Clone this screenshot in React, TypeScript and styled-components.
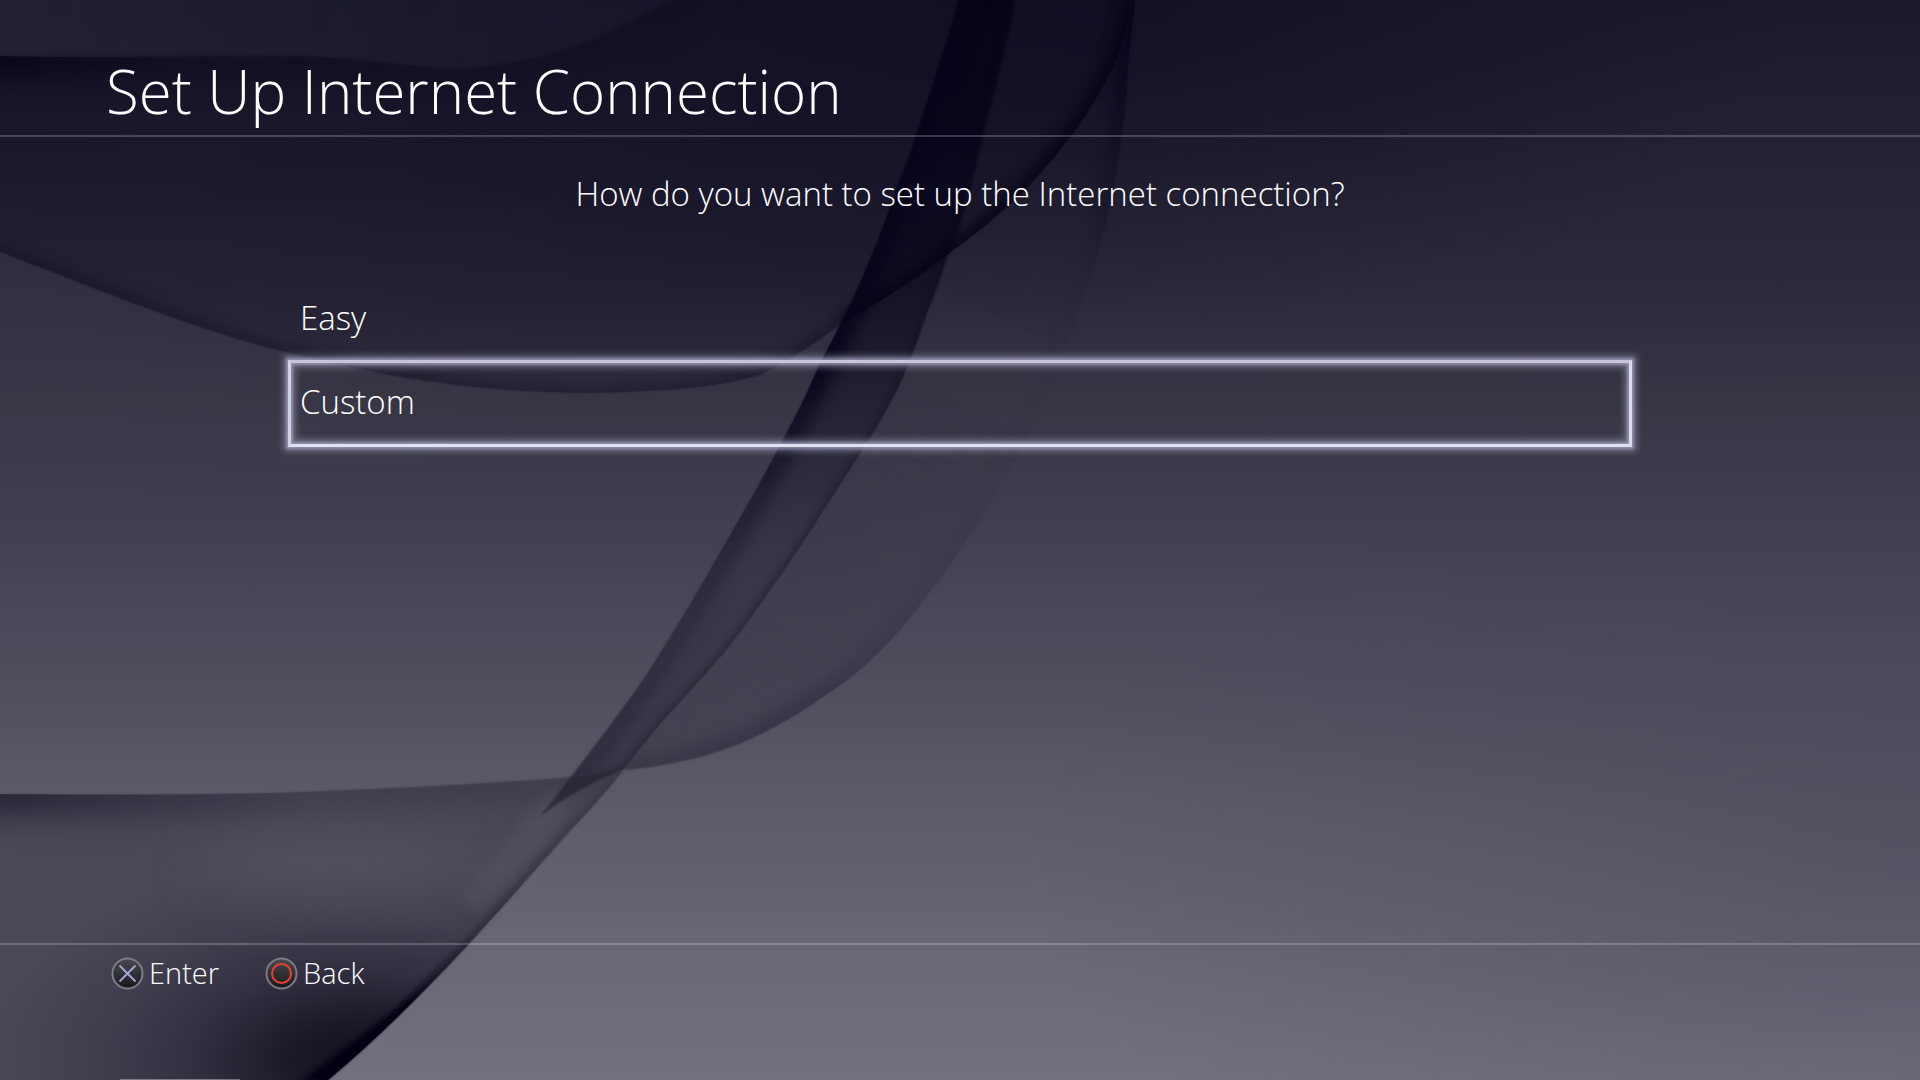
import React from "react";
import styled, { createGlobalStyle, css } from "styled-components";

const GlobalStyle = createGlobalStyle`
  *, *::before, *::after { box-sizing: border-box; }
  body { margin: 0; background: #2b293a; }
`;

const rule = "2px solid rgba(255, 255, 255, 0.2)";

const Screen = styled.div`
  display: grid;
  min-height: 100vh;
  overflow: hidden;
  color: #fff;
  font-family: "Open Sans", "Noto Sans", sans-serif;
  font-weight: 300;
`;

const Wallpaper = styled.svg`
  grid-area: 1 / 1;
  display: block;
  width: 100%;
  height: 100%;
  min-height: 100vh;
`;

const Layout = styled.div`
  grid-area: 1 / 1;
  z-index: 1;
  display: flex;
  flex-direction: column;
  min-width: 0;
`;

const Header = styled.header`
  display: flex;
  align-items: flex-end;
  height: 137px;
  padding: 0 106px;
  border-bottom: ${rule};
`;

const Title = styled.h1`
  margin: 0;
  font-size: 60px;
  font-weight: 300;
  line-height: 88px;
`;

const Main = styled.main`
  display: flex;
  flex: 1;
  flex-direction: column;
  align-items: center;
`;

const Prompt = styled.p`
  margin: 36px 0 61px;
  font-size: 33px;
  line-height: 42px;
`;

const Options = styled.ul`
  width: 70%;
  margin: 0;
  padding: 0;
  list-style: none;

  li + li {
    margin-top: -3px;
  }
`;

const Option = styled.button<{ $focused?: boolean }>`
  display: flex;
  align-items: center;
  width: 100%;
  height: 87px;
  padding: 0 9px 5px;
  border: 3px solid transparent;
  background: none;
  color: inherit;
  font: inherit;
  font-size: 33px;
  text-align: left;
  cursor: pointer;

  ${({ $focused }) =>
    $focused &&
    css`
      border-color: #c6c5dc #dcdcf0 #dfe0f0 #d2d1e6;
      box-shadow:
        0 0 3px 2px rgba(190, 190, 218, 0.55),
        0 0 6px 5px rgba(170, 170, 204, 0.4),
        inset 0 0 3px 2px rgba(190, 190, 218, 0.55),
        inset 0 0 6px 5px rgba(170, 170, 204, 0.4);
    `}
`;

const Footer = styled.footer`
  display: flex;
  flex-direction: column;
  justify-content: space-between;
  height: 137px;
  padding: 0 111px;
  border-top: ${rule};
`;

const Hints = styled.div`
  display: flex;
  gap: 46px;
  padding-top: 7px;
`;

const Hint = styled.button`
  display: flex;
  align-items: center;
  gap: 5px;
  height: 42px;
  padding: 0;
  border: 0;
  background: none;
  color: inherit;
  font: inherit;
  font-size: 29px;
  line-height: 40px;
  cursor: pointer;
`;

const HintIcon = styled.svg`
  display: block;
  width: 33px;
  height: 33px;
`;

const Handle = styled.div`
  width: 120px;
  height: 1px;
  margin-left: 9px;
  background: rgba(255, 255, 255, 0.35);
`;

function PadButton({ id, children }: { id: string; children: React.ReactNode }) {
  return (
    <HintIcon viewBox="0 0 33 33" fill="none" aria-hidden="true">
      <defs>
        <linearGradient id={id} x1="0" y1="0" x2="0" y2="1">
          <stop offset="0" stopColor="#4a4b4e" />
          <stop offset="1" stopColor="#17171c" />
        </linearGradient>
      </defs>
      <circle cx="16.5" cy="16.5" r="15" fill={`url(#${id})`} stroke="#7c7d84" strokeWidth="2" />
      {children}
    </HintIcon>
  );
}

const SHEET_HEM =
  "M-40 234 L0 252 C100 290 200 332 290 353 C400 382 500 393 590 393 C660 392 715 388 760 375 C800 356 822 337 843 323 C865 310 882 300 900 288 C918 277 930 268 947 255 C970 238 988 224 1007 207 C1020 196 1032 183 1043 170 C1054 158 1062 148 1070 137 C1080 124 1087 114 1093 103 C1102 89 1108 78 1113 67 C1122 47 1129 22 1132 0";
const SHEET = `${SHEET_HEM} L1136 -20 L-40 -20 Z`;

const FOLD_EDGE = "M-60 56 L0 56 C120 59 210 55 300 56 C370 58 420 70 470 68 C560 60 610 35 670 0 L710 -30";
const TOP_FOLD = `${FOLD_EDGE} L-60 -30 Z`;
const UNDER_FOLD = `${FOLD_EDGE} L1000 -30 L1000 300 L-60 300 Z`;

const RIBBON_LEFT =
  "M965 -20 L959 0 C944 50 929 98 916 135 C911 153 904 170 897 187 C886 222 873 252 860 283 C847 312 834 338 820 363 C808 392 794 420 779 447 C758 487 736 525 714 563 C690 605 663 650 636 690 C614 720 593 748 571 777 C560 791 550 804 539 817";
const RIBBON_RIGHT =
  "C575 790 596 781 623 770 C636 754 648 739 661 723 C684 698 706 674 729 647 C753 615 777 581 800 547 C822 513 843 480 864 447 C880 423 892 401 903 377 C912 357 919 336 927 313 C935 294 941 276 947 257 C952 247 956 237 960 227 C968 197 976 167 983 135 C995 90 1007 45 1015 0 L1018 -20";
const RIBBON = `${RIBBON_LEFT} ${RIBBON_RIGHT} Z`;

const VEIL_EDGE =
  "M1138 -20 L1135 0 C1133 22 1130 45 1128 67 C1127 90 1125 113 1122 135 C1119 159 1115 183 1110 207 C1105 227 1099 247 1093 267 C1089 280 1085 293 1080 307 C1069 340 1058 372 1045 400 C1026 440 1004 483 979 523 C962 547 946 571 929 593 C901 632 868 668 829 693 C792 719 748 745 700 757 C676 763 651 768 623 770";
const VEIL = `${VEIL_EDGE} ${RIBBON_RIGHT.replace("C575 790 596 781 623 770 ", "")} Z`;

const SWELL_TOP = "M-80 794 L0 794 C100 795 230 795 300 792 C400 788 480 784 560 778 L623 771";
const HEM = "M623 771 C606 792 589 811 571 830 C557 846 543 861 529 877 C509 900 489 922 468 945 C424 992 376 1040 328 1080 L300 1104";
const SWELL = `${SWELL_TOP} ${HEM.slice(8)} L-80 1104 Z`;

function Waves() {
  return (
    <Wallpaper viewBox="0 0 1920 1080" preserveAspectRatio="none" aria-hidden="true">
      <defs>
        <linearGradient id="base" x1="0" y1="0" x2="0" y2="1">
          <stop offset="0" stopColor="#1c1a2a" />
          <stop offset="0.13" stopColor="#232132" />
          <stop offset="0.25" stopColor="#2b2939" />
          <stop offset="0.37" stopColor="#373544" />
          <stop offset="0.5" stopColor="#434151" />
          <stop offset="0.63" stopColor="#504e5d" />
          <stop offset="0.75" stopColor="#5d5b68" />
          <stop offset="0.87" stopColor="#686673" />
          <stop offset="1" stopColor="#73717f" />
        </linearGradient>
        <radialGradient id="topShade" gradientUnits="userSpaceOnUse" cx="0" cy="0" r="1" gradientTransform="translate(1040 0) scale(760 340)">
          <stop offset="0" stopColor="#0a0720" stopOpacity="0.6" />
          <stop offset="0.5" stopColor="#0a0720" stopOpacity="0.28" />
          <stop offset="1" stopColor="#0a0720" stopOpacity="0" />
        </radialGradient>
        <radialGradient id="cornerShade" gradientUnits="userSpaceOnUse" cx="0" cy="0" r="1" gradientTransform="translate(1920 860) scale(900 420)">
          <stop offset="0" stopColor="#3a384c" stopOpacity="0.32" />
          <stop offset="1" stopColor="#3a384c" stopOpacity="0" />
        </radialGradient>
        <radialGradient id="leftLight" gradientUnits="userSpaceOnUse" cx="0" cy="0" r="1" gradientTransform="translate(0 290) scale(600 260)">
          <stop offset="0" stopColor="#4a4858" stopOpacity="0.2" />
          <stop offset="1" stopColor="#4a4858" stopOpacity="0" />
        </radialGradient>
        <linearGradient id="sheetFill" gradientUnits="userSpaceOnUse" x1="0" y1="0" x2="0" y2="393">
          <stop offset="0" stopColor="#121024" stopOpacity="0.64" />
          <stop offset="0.45" stopColor="#141226" stopOpacity="0.58" />
          <stop offset="0.75" stopColor="#181628" stopOpacity="0.52" />
          <stop offset="1" stopColor="#201e2e" stopOpacity="0.3" />
        </linearGradient>
        <linearGradient id="foldFill" gradientUnits="userSpaceOnUse" x1="0" y1="0" x2="680" y2="0">
          <stop offset="0" stopColor="#363446" stopOpacity="0.4" />
          <stop offset="1" stopColor="#30304a" stopOpacity="0.12" />
        </linearGradient>
        <linearGradient id="foldEdge" gradientUnits="userSpaceOnUse" x1="0" y1="0" x2="660" y2="0">
          <stop offset="0" stopColor="#030118" stopOpacity="0.95" />
          <stop offset="0.3" stopColor="#060418" stopOpacity="0.4" />
          <stop offset="1" stopColor="#060418" stopOpacity="0.2" />
        </linearGradient>
        <linearGradient id="ribbonFill" gradientUnits="userSpaceOnUse" x1="0" y1="0" x2="0" y2="817">
          <stop offset="0" stopColor="#030115" stopOpacity="0.75" />
          <stop offset="0.25" stopColor="#05031a" stopOpacity="0.66" />
          <stop offset="0.45" stopColor="#08061a" stopOpacity="0.5" />
          <stop offset="0.56" stopColor="#141226" stopOpacity="0.4" />
          <stop offset="0.68" stopColor="#1d1b2e" stopOpacity="0.32" />
          <stop offset="0.86" stopColor="#1d1b2e" stopOpacity="0.44" />
          <stop offset="1" stopColor="#1d1b2e" stopOpacity="0.6" />
        </linearGradient>
        <linearGradient id="ribbonEdge" gradientUnits="userSpaceOnUse" x1="0" y1="0" x2="0" y2="817">
          <stop offset="0" stopColor="#05031a" stopOpacity="0.3" />
          <stop offset="0.45" stopColor="#05031a" stopOpacity="0.85" />
          <stop offset="0.6" stopColor="#141226" stopOpacity="0.55" />
          <stop offset="0.75" stopColor="#1d1b2e" stopOpacity="0.35" />
          <stop offset="1" stopColor="#1d1b2e" stopOpacity="0.3" />
        </linearGradient>
        <linearGradient id="veilFill" gradientUnits="userSpaceOnUse" x1="1110" y1="0" x2="750" y2="770">
          <stop offset="0" stopColor="#080620" stopOpacity="0.3" />
          <stop offset="0.25" stopColor="#1b192a" stopOpacity="0.05" />
          <stop offset="0.4" stopColor="#262434" stopOpacity="0" />
          <stop offset="0.5" stopColor="#262434" stopOpacity="0" />
          <stop offset="0.75" stopColor="#262434" stopOpacity="0.2" />
          <stop offset="1" stopColor="#262434" stopOpacity="0.36" />
        </linearGradient>
        <linearGradient id="veilEdge" gradientUnits="userSpaceOnUse" x1="1130" y1="0" x2="750" y2="770">
          <stop offset="0" stopColor="#050318" stopOpacity="0.8" />
          <stop offset="0.15" stopColor="#0a0820" stopOpacity="0.5" />
          <stop offset="0.32" stopColor="#1a182a" stopOpacity="0.1" />
          <stop offset="0.42" stopColor="#201e30" stopOpacity="0" />
          <stop offset="0.6" stopColor="#201e30" stopOpacity="0.03" />
          <stop offset="0.75" stopColor="#201e30" stopOpacity="0.12" />
          <stop offset="0.92" stopColor="#201e30" stopOpacity="0.36" />
          <stop offset="1" stopColor="#201e30" stopOpacity="0.3" />
        </linearGradient>
        <radialGradient id="swellFill" gradientUnits="userSpaceOnUse" cx="0" cy="0" r="1" gradientTransform="translate(360 1060) scale(370 200)">
          <stop offset="0" stopColor="#12101e" />
          <stop offset="0.2" stopColor="#1c1a28" />
          <stop offset="0.45" stopColor="#323040" />
          <stop offset="0.7" stopColor="#403e4d" />
          <stop offset="1" stopColor="#4a4856" />
        </radialGradient>
        <linearGradient id="swellEdge" gradientUnits="userSpaceOnUse" x1="0" y1="0" x2="620" y2="0">
          <stop offset="0" stopColor="#1b192a" stopOpacity="0.95" />
          <stop offset="0.5" stopColor="#2b293a" stopOpacity="0.4" />
          <stop offset="1" stopColor="#2b293a" stopOpacity="0.4" />
        </linearGradient>
        <linearGradient id="hemEdge" gradientUnits="userSpaceOnUse" x1="618" y1="775" x2="328" y2="1080">
          <stop offset="0" stopColor="#2a2838" stopOpacity="0.3" />
          <stop offset="0.5" stopColor="#1c1a2a" stopOpacity="0.45" />
          <stop offset="0.75" stopColor="#020010" stopOpacity="0.9" />
          <stop offset="1" stopColor="#020010" />
        </linearGradient>
        <filter id="soft1" filterUnits="userSpaceOnUse" x="-100" y="-60" width="2120" height="1220" colorInterpolationFilters="sRGB">
          <feGaussianBlur stdDeviation="1" />
        </filter>
        <filter id="soft3" filterUnits="userSpaceOnUse" x="-100" y="-60" width="2120" height="1220" colorInterpolationFilters="sRGB">
          <feGaussianBlur stdDeviation="3" />
        </filter>
        <filter id="soft7" filterUnits="userSpaceOnUse" x="-100" y="-60" width="2120" height="1220" colorInterpolationFilters="sRGB">
          <feGaussianBlur stdDeviation="7" />
        </filter>
        <filter id="soft16" filterUnits="userSpaceOnUse" x="-100" y="-60" width="2120" height="1220" colorInterpolationFilters="sRGB">
          <feGaussianBlur stdDeviation="16" />
        </filter>
        <filter id="soft30" filterUnits="userSpaceOnUse" x="-100" y="-60" width="2120" height="1220" colorInterpolationFilters="sRGB">
          <feGaussianBlur stdDeviation="30" />
        </filter>
        <clipPath id="sheetClip"><path d={SHEET} /></clipPath>
        <clipPath id="foldClip"><path d={UNDER_FOLD} /></clipPath>
        <clipPath id="ribbonClip"><path d={RIBBON} /></clipPath>
        <clipPath id="veilClip"><path d={VEIL} /></clipPath>
        <clipPath id="swellClip"><path d={SWELL} /></clipPath>
      </defs>

      <rect width="1920" height="1080" fill="url(#base)" />
      <rect width="1920" height="1080" fill="url(#topShade)" />
      <rect width="1920" height="1080" fill="url(#cornerShade)" />
      <rect width="1920" height="1080" fill="url(#leftLight)" />

      <path d={VEIL} fill="url(#veilFill)" filter="url(#soft1)" />
      <g clipPath="url(#veilClip)">
        <path d={VEIL_EDGE} fill="none" stroke="url(#veilEdge)" strokeWidth="26" filter="url(#soft7)" />
      </g>

      <path d={SHEET} fill="url(#sheetFill)" filter="url(#soft1)" />
      <path d={TOP_FOLD} fill="url(#foldFill)" filter="url(#soft3)" />
      <g clipPath="url(#foldClip)">
        <path d={FOLD_EDGE} fill="none" stroke="url(#foldEdge)" strokeWidth="34" filter="url(#soft16)" />
      </g>
      <g clipPath="url(#sheetClip)">
        <path d={SHEET_HEM} fill="none" stroke="#0c0a1e" strokeOpacity="0.5" strokeWidth="12" filter="url(#soft7)" />
        <path
          d="M843 323 C865 310 882 300 900 288 C918 277 930 268 947 255 C970 238 988 224 1007 207 C1020 196 1032 183 1043 170 C1054 158 1062 148 1070 137 C1080 124 1087 114 1093 103 C1102 89 1108 78 1113 67 C1122 47 1129 22 1132 0"
          fill="none" stroke="#020012" strokeOpacity="0.75" strokeWidth="14" filter="url(#soft7)"
        />
      </g>

      <path d={RIBBON} fill="url(#ribbonFill)" filter="url(#soft1)" />
      <g clipPath="url(#ribbonClip)">
        <path d={RIBBON_LEFT} fill="none" stroke="url(#ribbonEdge)" strokeWidth="34" filter="url(#soft7)" />
        <path d={`M539 817 ${RIBBON_RIGHT}`} fill="none" stroke="#0c0a1e" strokeOpacity="0.35" strokeWidth="8" filter="url(#soft3)" />
      </g>

      <path d={SWELL} fill="url(#swellFill)" filter="url(#soft1)" />
      <g clipPath="url(#swellClip)">
        <path d={SWELL_TOP} fill="none" stroke="url(#swellEdge)" strokeWidth="34" filter="url(#soft16)" />
        <ellipse cx="340" cy="870" rx="130" ry="30" fill="#5f5d6a" fillOpacity="0.5" filter="url(#soft30)" />
        <path d="M560 800 L470 905" fill="none" stroke="#666471" strokeOpacity="0.25" strokeWidth="26" filter="url(#soft7)" />
        <path d={HEM} fill="none" stroke="url(#hemEdge)" strokeWidth="12" filter="url(#soft3)" />
        <path d="M430 985 L328 1082 L300 1082 Z" fill="#020010" filter="url(#soft3)" />
      </g>
      <path d="M539 817 C550 804 560 791 571 777 L623 770 C596 781 575 790 539 817 Z" fill="#1c1a2a" fillOpacity="0.6" filter="url(#soft1)" />
    </Wallpaper>
  );
}

export default function App() {
  return (
    <>
      <GlobalStyle />
      <Screen>
        <Waves />
        <Layout>
          <Header>
            <Title>Set Up Internet Connection</Title>
          </Header>
          <Main>
            <Prompt>How do you want to set up the Internet connection?</Prompt>
            <Options>
              <li><Option type="button">Easy</Option></li>
              <li><Option type="button" $focused>Custom</Option></li>
            </Options>
          </Main>
          <Footer>
            <Hints>
              <Hint type="button">
                <PadButton id="crossFace">
                  <path d="M8.5 8.5 L24.5 24.5 M24.5 8.5 L8.5 24.5" stroke="#a5a3d6" strokeWidth="2" />
                </PadButton>
                Enter
              </Hint>
              <Hint type="button">
                <PadButton id="circleFace">
                  <circle cx="16.5" cy="16.5" r="9.5" stroke="#e8402f" strokeWidth="2" />
                </PadButton>
                Back
              </Hint>
            </Hints>
            <Handle />
          </Footer>
        </Layout>
      </Screen>
    </>
  );
}
